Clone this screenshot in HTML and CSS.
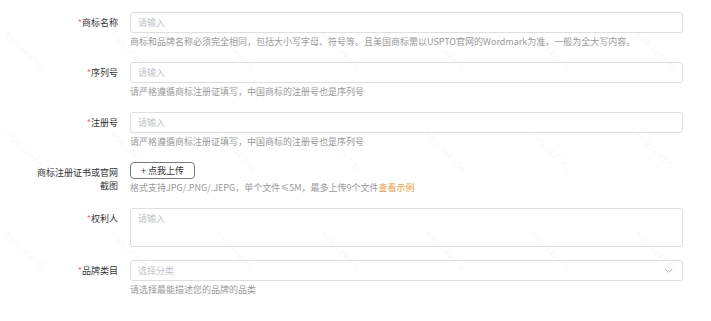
FILE: index.html
```html
<!DOCTYPE html>
<html lang="zh-CN">
<head>
    <meta charset="UTF-8">
    <title>品牌信息</title>
    <link rel="stylesheet" href="styles.css">
</head>
<body>
    <div class="form">
        <div class="form-item">
            <label class="label"><span class="req">*</span>商标名称</label>
            <div class="control">
                <input class="input" type="text" placeholder="请输入">
                <div class="help">商标和品牌名称必须完全相同，包括大小写字母、符号等。且美国商标需以USPTO官网的Wordmark为准，一般为全大写内容。</div>
            </div>
        </div>

        <div class="form-item">
            <label class="label"><span class="req">*</span>序列号</label>
            <div class="control">
                <input class="input" type="text" placeholder="请输入">
                <div class="help">请严格遵循商标注册证填写，中国商标的注册号也是序列号</div>
            </div>
        </div>

        <div class="form-item">
            <label class="label"><span class="req">*</span>注册号</label>
            <div class="control">
                <input class="input" type="text" placeholder="请输入">
                <div class="help">请严格遵循商标注册证填写，中国商标的注册号也是序列号</div>
            </div>
        </div>

        <div class="form-item">
            <label class="label">商标注册证书或官网截图</label>
            <div class="control">
                <button class="upload-btn" type="button">+ 点我上传</button>
                <div class="help">格式支持JPG/.PNG/.JEPG，单个文件≤5M，最多上传9个文件<a class="link" href="#">查看示例</a></div>
            </div>
        </div>

        <div class="form-item">
            <label class="label"><span class="req">*</span>权利人</label>
            <div class="control">
                <textarea class="textarea" placeholder="请输入"></textarea>
            </div>
        </div>

        <div class="form-item">
            <label class="label"><span class="req">*</span>品牌类目</label>
            <div class="control">
                <div class="select">
                    <span class="select-text">选择分类</span>
                    <svg class="arrow" width="9" height="6" viewBox="0 0 9 6"><path d="M1 1l3.5 3.5L8 1" fill="none" stroke="#b8bcc4" stroke-width="1"/></svg>
                </div>
                <div class="help">请选择最能描述您的品牌的品类</div>
            </div>
        </div>
    </div>

    <div class="watermark" id="watermark"></div>

    <script>
        // faint repeated watermark
        const wm = document.getElementById('watermark');
        for (let i = 0; i < 21; i++) {
            const s = document.createElement('span');
            s.textContent = '6S8L14V7(5)';
            wm.appendChild(s);
        }
    </script>
</body>
</html>
```

FILE: styles.css
```css
body {
    margin: 0;
    background: #fff;
    font-family: "Noto Sans CJK SC", "Noto Sans", sans-serif;
    font-size: 9px;
    color: #333;
}

.form {
    padding: 12px 28px 0 34px;
}

.form-item {
    display: flex;
    margin-bottom: 13px;
}

.label {
    width: 84px;
    flex-shrink: 0;
    padding-top: 4px;
    padding-right: 12px;
    line-height: 13px;
    text-align: right;
    color: #333;
}

.req {
    color: #f56c6c;
}

.control {
    flex: 1;
    min-width: 0;
}

.input,
.textarea,
.select {
    display: block;
    box-sizing: border-box;
    width: 100%;
    border: 1px solid #dcdfe6;
    border-radius: 3px;
    font-family: inherit;
    font-size: 9px;
    color: #333;
    background: #fff;
    outline: none;
}

.input {
    height: 21px;
    padding: 0 7px;
}

.textarea {
    height: 39px;
    padding: 3px 7px;
    resize: none;
    line-height: 13px;
}

.input::placeholder,
.textarea::placeholder {
    color: #c0c4cc;
}

.select {
    height: 21px;
    padding: 0 7px;
    display: flex;
    align-items: center;
    justify-content: space-between;
}

.select-text {
    color: #c0c4cc;
}

.arrow {
    margin-right: 2px;
}

.help {
    margin-top: 2px;
    line-height: 14px;
    color: #999;
    white-space: nowrap;
}

.link {
    color: #f39a3a;
    text-decoration: none;
}

.upload-btn {
    display: block;
    height: 17px;
    padding: 0 10px;
    border: 1px solid #7a7a7a;
    border-radius: 4px;
    background: #fff;
    font-family: inherit;
    font-size: 9px;
    color: #333;
    line-height: 15px;
    cursor: pointer;
}

.watermark {
    position: absolute;
    inset: 0;
    pointer-events: none;
    display: grid;
    grid-template-columns: repeat(7, 105px);
    grid-auto-rows: 100px;
    padding: 30px 0 0 10px;
    overflow: hidden;
}

.watermark span {
    font-family: "DejaVu Sans", sans-serif;
    font-size: 8px;
    color: rgba(0, 0, 0, 0.06);
    transform: rotate(45deg);
    transform-origin: left top;
    white-space: nowrap;
}
```
